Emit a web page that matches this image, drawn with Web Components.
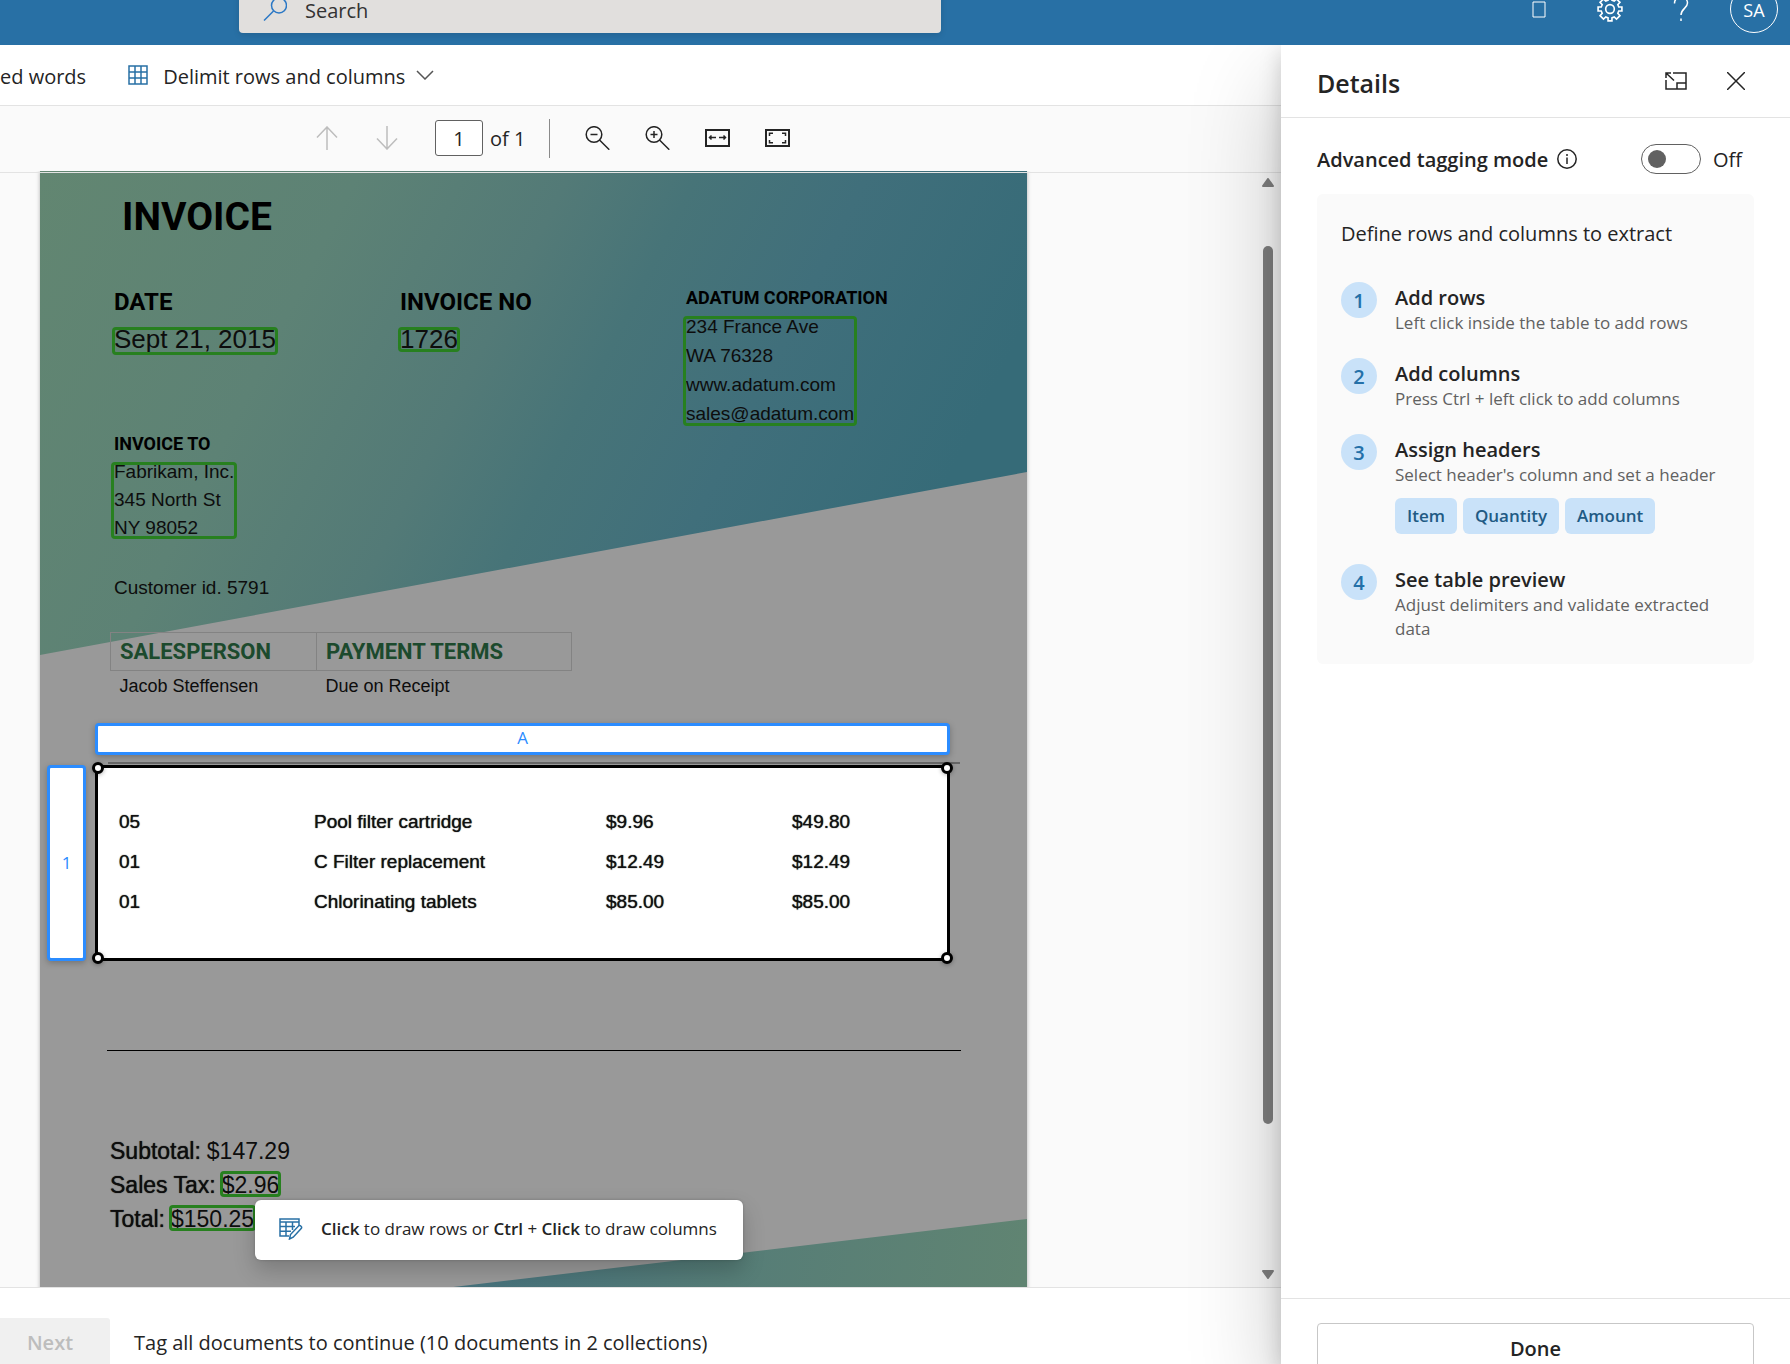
<!DOCTYPE html>
<html lang="en">
<head>
<meta charset="utf-8">
<title>Tag documents</title>
<style>
    html, body { height: 100%; margin: 0; }
    body {
        --ui-font: "Open Sans", "Noto Sans", sans-serif;
        --ink: #242424;
        --brand: #2870a5;
        --line: #e3e3e3;
        font-family: var(--ui-font);
        font-size: 20px;
        color: var(--ink);
        background: #fff;
        overflow: hidden;
    }
</style>
</head>
<body>
<tagging-app></tagging-app>

<script>
const ICONS = {
    search: { box: '0 0 24 24', size: [24, 24], body: '<circle cx="16" cy="8.500" r="7.500"/><path d="M10.500 14 1 23.500"/>' },
    square: { box: '0 0 14 17', size: [14, 17], body: '<path d="M1 1h12v15H1z"/>' },
    gear: {
        box: '0 0 24 24', size: [26, 26],
        body: '<circle cx="12" cy="12" r="4"/><path d="M10.200 1v2.800l-2.100.9L6 2.700 2.800 5.900l2 2.200-.9 2.100H1v3.600h2.900l.9 2.100-2 2.200L6 21.300l2.100-2 2.100.9V23h3.600v-2.800l2.100-.9 2.100 2 3.200-3.200-2-2.200.9-2.100H23v-3.600h-2.900l-.9-2.100 2-2.200L18 2.700l-2.100 2-2.100-.9V1"/>'
    },
    help: { box: '0 0 16 26', size: [16, 26], body: '<path d="M1.500 7.500C1.500 3.500 4 1.500 8 1.500s6.500 2.300 6.500 5.500c0 5-6.500 6-6.500 12"/><path d="M8 22.500v2.500"/>' },
    grid: { box: '0 0 20 20', size: [20, 20], body: '<path d="M1 1h18v18H1zM1 7h18M1 13h18M7 1v18M13 1v18"/>' },
    chevron: { box: '0 0 18 10', size: [18, 10], body: '<path d="m1 1 8 8 8-8"/>' },
    up: { box: '0 0 22 24', size: [22, 24], body: '<path d="M11 24V1M1 11.500 11 1l10 10.500"/>' },
    down: { box: '0 0 22 24', size: [22, 24], body: '<path d="M11 0v23M1 12.500 11 23l10-10.500"/>' },
    zoomOut: { box: '0 0 25 24', size: [25, 24], body: '<circle cx="9" cy="8.500" r="7.800"/><path d="m14.500 14 9.800 9.700M5.500 8.500h7"/>' },
    zoomIn: { box: '0 0 25 24', size: [25, 24], body: '<circle cx="9" cy="8.500" r="7.800"/><path d="m14.500 14 9.800 9.700M5.500 8.500h7M9 5v7"/>' },
    fitWidth: { box: '0 0 25 18', size: [25, 18], body: '<path d="M1 1h23v16H1z"/><path stroke-width="1.500" d="M4.500 8.500H11M14 8.500h6.500M6.500 6.500l-2 2 2 2M18.500 6.500l2 2-2 2"/>' },
    fitPage: { box: '0 0 25 18', size: [25, 18], body: '<path d="M1 1h23v16H1z"/><path stroke-width="1.500" d="M4.500 7V4.200H8M17 4.200h3.500V7M20.500 11v2.800H17M8 13.800H4.500V11"/>' },
    dock: { box: '0 0 22 18', size: [22, 18], body: '<path d="M8 1h13v16H1V8M12 17v-6h9M1 6V1h5M1.500 1.500 9 8.500"/>' },
    close: { box: '0 0 18 18', size: [18, 18], body: '<path d="m0 0 18 18M18 0 0 18"/>' },
    info: { box: '0 0 20 20', size: [20, 20], body: '<circle cx="10" cy="10" r="9.200"/><path d="M10 8.500v6.500M10 5v2"/>' },
    tableEdit: {
        box: '0 0 24 22', size: [24, 22],
        body: '<path d="M10 18H1V1h19v6M1 4h19M1 8.500h15M1 13.200h11M7 4v14M13.500 4v8M20 4v4"/><path d="m10.500 21 1-4.500 8-8.500c1.800-1.200 4 .8 2.700 2.600l-8 8.600z"/>'
    }
};

/* Each component fills its shadow root from its own static template string. */
class UiElement extends HTMLElement {
    constructor() {
        super();
        this.attachShadow({ mode: 'open' });
        const template = document.createElement('template');
        template.innerHTML = `
            <style>
                * { box-sizing: border-box; }
                button, input { font: inherit; color: inherit; margin: 0; }
                button { background: none; border: 0; padding: 0; cursor: pointer; }
                ${this.constructor.css || ''}
            </style>
            ${this.constructor.html || '<slot></slot>'}
        `;
        this.shadowRoot.appendChild(template.content.cloneNode(true));
    }
}

class UiIcon extends UiElement {
    static css = `
        :host { display: inline-flex; flex: none; }
        svg { display: block; fill: none; stroke: currentColor; stroke-width: var(--stroke, 1.500); }
    `;
    static html = '<div></div>';

    connectedCallback() {
        const icon = ICONS[this.getAttribute('name')];
        this.shadowRoot.querySelector('div').innerHTML =
            `<svg aria-hidden="true" width="${icon.size[0]}" height="${icon.size[1]}" viewBox="${icon.box}">${icon.body}</svg>`;
    }
}

class SuiteHeader extends UiElement {
    static css = `
        :host {
            display: flex; flex-direction: column; justify-content: flex-end;
            height: 45px; overflow: hidden; position: relative; z-index: 3;
            background: var(--brand); color: #fff;
        }
        .bar { flex: none; height: 72px; display: flex; align-items: center; padding: 0 12px 0 239px; }
        .search {
            flex: 0 1 702px; height: 48px; display: flex; align-items: center; gap: 18px; padding: 0 24px;
            background: #e1dfdd; border-radius: 4px; color: #2b78c5; box-shadow: 0 2px 6px rgba(0,0,0,.12);
        }
        .search input { flex: 1; min-width: 0; border: 0; background: none; outline: 0; padding: 2px 0 0; color: #333; }
        .search input::placeholder { color: #333; opacity: 1; }
        .actions { margin-left: auto; display: flex; align-items: center; }
        .actions button { width: 71px; height: 48px; display: grid; place-items: center; }
        .actions .avatar {
            width: 48px; height: 48px; margin-left: 14px; padding-top: 2px; line-height: 18px;
            border: 1px solid #fff; border-radius: 50%; font-size: 18px; font-weight: 500;
        }
    `;
    static html = `
        <div class="bar">
            <label class="search"><ui-icon name="search"></ui-icon><input type="text" placeholder="Search" aria-label="Search"></label>
            <div class="actions">
                <button aria-label="Apps"><ui-icon name="square" style="--stroke: 1"></ui-icon></button>
                <button aria-label="Settings"><ui-icon name="gear"></ui-icon></button>
                <button aria-label="Help"><ui-icon name="help"></ui-icon></button>
                <button class="avatar">SA</button>
            </div>
        </div>
    `;
}

class CommandBar extends UiElement {
    static css = `
        :host {
            display: flex; align-items: center; gap: 42px; height: 61px; flex: none;
            border-bottom: 1px solid var(--line); background: #fff; white-space: nowrap;
        }
        button { display: flex; align-items: center; }
        span { padding-top: 2px; }
        .menu ui-icon:first-child { color: var(--brand); margin-right: 15px; }
        .menu ui-icon:last-child { color: #555; margin-left: 11px; }
    `;
    static html = `
        <button><span>ed words</span></button>
        <button class="menu" aria-haspopup="true">
            <ui-icon name="grid"></ui-icon><span>Delimit rows and columns</span><ui-icon name="chevron"></ui-icon>
        </button>
    `;
}

class PageToolbar extends UiElement {
    static css = `
        :host { display: flex; align-items: center; height: 65px; flex: none; padding: 0 0 1px 297px; background: #fafafa; }
        button { width: 60px; height: 48px; display: grid; place-items: center; }
        button:disabled { color: #bdbdbd; cursor: default; }
        label { display: flex; align-items: center; gap: 7px; margin-left: 18px; }
        input {
            width: 48px; height: 36px; padding: 0; text-align: center;
            border: 1px solid #616161; border-radius: 3px; background: #fff;
        }
        hr { width: 1px; height: 39px; margin: 0 17px 0 24px; border: 0; background: #8a8a8a; }
    `;
    static html = `
        <button disabled aria-label="Previous page"><ui-icon name="up"></ui-icon></button>
        <button disabled aria-label="Next page"><ui-icon name="down"></ui-icon></button>
        <label><input type="text" value="1" aria-label="Page">of 1</label>
        <hr>
        <button aria-label="Zoom out"><ui-icon name="zoomOut"></ui-icon></button>
        <button aria-label="Zoom in"><ui-icon name="zoomIn"></ui-icon></button>
        <button aria-label="Fit to width"><ui-icon name="fitWidth" style="--stroke: 2"></ui-icon></button>
        <button aria-label="Fit to page"><ui-icon name="fitPage" style="--stroke: 2"></ui-icon></button>
    `;
}

/* Text with the green frame of a tagged field laid over it. */
class FieldTag extends UiElement {
    static css = `
        :host { display: inline-block; position: relative; }
        :host::after {
            content: ''; position: absolute; inset: var(--frame, 3px -2px 5px);
            border: 3px solid #27801f; border-radius: 4px; pointer-events: none;
        }
    `;
}

class TableSelection extends UiElement {
    static css = `
        :host {
            display: grid; grid-template: 32px 196px / 39px 1fr; gap: 10px 9px;
            font-family: var(--ui-font); font-size: 17px; color: #2b8cff;
        }
        .header {
            display: grid; place-items: center; background: #fff; line-height: 24px;
            border: 3px solid #2b8cff; border-radius: 4px; box-shadow: 0 2px 6px rgba(0,0,0,.25);
        }
        .column { grid-column: 2; padding-bottom: 2px; }
        .area {
            position: relative; padding: 34px 0 0 21px; background: #fff; border: 3px solid #000;
            font-family: "Liberation Sans", Arial, sans-serif; color: #111;
        }
        .area::before {
            content: ''; position: absolute; top: -6px; left: 10px; right: -13px; height: 2px; background: #666;
        }
        .handle {
            position: absolute; width: 12px; height: 12px; border: 3px solid #000;
            border-radius: 50%; background: #fff; box-shadow: 0 1px 4px rgba(0,0,0,.3);
        }
        .tl { top: -6px; left: -6px; }
        .tr { top: -6px; right: -6px; }
        .bl { bottom: -6px; left: -6px; }
        .br { bottom: -6px; right: -6px; }
    `;
    static html = `
        <div class="header column">A</div>
        <div class="header">1</div>
        <div class="area">
            <slot></slot>
            <span class="handle tl"></span><span class="handle tr"></span>
            <span class="handle bl"></span><span class="handle br"></span>
        </div>
    `;
}

class InvoicePage extends UiElement {
    static css = `
        :host {
            display: block; position: relative; width: 100%; max-width: 987px; aspect-ratio: 987 / 1277; flex: none;
            background: #999; box-shadow: 0 0 4px rgba(0,0,0,.3); color: #0d0d0d;
            font-family: "Liberation Sans", Arial, sans-serif; font-size: 19px; line-height: 29px;
        }
        .backdrop { position: absolute; inset: 0; width: 100%; height: 100%; }
        .content { position: relative; padding: 22px 0 0 74px; }
        h1, h2, h3, p, dl, dd { margin: 0; }
        h1, h2, h3, th { font-family: Roboto, sans-serif; font-weight: 700; color: #000; }
        h1 { font-size: 39px; line-height: 48px; margin: 0 0 43px 8px; }
        h2 { font-size: 24px; line-height: 36px; margin-bottom: 4px; }
        h3 { font-size: 18px; line-height: 28px; }
        .heads { display: grid; grid-template-columns: 286px 286px 1fr; }
        .big { font-size: 26px; line-height: 30px; }
        .to { margin-top: 2px; line-height: 28px; }
        .customer { margin-top: 31px; }
        table { border-collapse: collapse; table-layout: fixed; text-align: left; }
        .terms { width: 462px; margin: 30px 0 0 -4px; font-size: 18px; }
        .terms th {
            height: 38px; padding: 0 9px; border: 1px solid #838383;
            font-size: 22px; line-height: 24px; color: #1c4a2d;
        }
        .terms td { padding: 1px 9px 0; line-height: 28px; }
        table-selection { margin: 23px 77px 0 -67px; }
        .items { width: 100%; font-size: 19px; text-shadow: 0 0 1px #111; }
        .items td { height: 40px; padding: 0; line-height: 28px; }
        .rule { height: 1px; margin: 89px 66px 83px -7px; border: 0; background: #000; }
        dl { margin-left: -4px; font-size: 23px; line-height: 34px; }
        dl div { display: flex; gap: 6px; }
        dt { text-shadow: 0 0 1px #0d0d0d; }
    `;
    static html = `
        <svg class="backdrop" viewBox="0 0 987 1277" preserveAspectRatio="none" aria-hidden="true">
            <linearGradient id="top" gradientUnits="userSpaceOnUse" x1="0" y1="0" x2="850" y2="425">
                <stop offset="0" stop-color="#628671"/><stop offset=".3" stop-color="#5d8275"/>
                <stop offset=".5" stop-color="#537a77"/><stop offset=".62" stop-color="#477478"/>
                <stop offset=".78" stop-color="#406f7b"/><stop offset="1" stop-color="#366b78"/>
            </linearGradient>
            <linearGradient id="bottom" gradientUnits="userSpaceOnUse" x1="400" y1="1080" x2="980" y2="1140">
                <stop offset="0" stop-color="#44707c"/><stop offset=".5" stop-color="#567d77"/>
                <stop offset="1" stop-color="#608472"/>
            </linearGradient>
            <path fill="url(#top)" d="M0 0h987v301L0 484z"/>
            <path fill="url(#bottom)" d="M0 1165l987-117v229H0z"/>
        </svg>
        <div class="content">
            <h1>INVOICE</h1>
            <div class="heads">
                <div><h2>DATE</h2><field-tag class="big" style="--frame: 3px -2px -1px">Sept 21, 2015</field-tag></div>
                <div><h2>INVOICE NO</h2><field-tag class="big" style="--frame: 3px -2px 2px">1726</field-tag></div>
                <div>
                    <h3>ADATUM CORPORATION</h3>
                    <field-tag style="--frame: 4px -3px 2px">234 France Ave<br>WA 76328<br>www.adatum.com<br>sales@adatum.com</field-tag>
                </div>
            </div>
            <div class="to">
                <h3>INVOICE TO</h3>
                <field-tag style="--frame: 4px -3px 3px">Fabrikam, Inc.<br>345 North St<br>NY 98052</field-tag>
            </div>
            <p class="customer">Customer id. 5791</p>
            <table class="terms">
                <colgroup><col style="width: 206px"><col></colgroup>
                <tr><th>SALESPERSON</th><th>PAYMENT TERMS</th></tr>
                <tr><td>Jacob Steffensen</td><td>Due on Receipt</td></tr>
            </table>
            <table-selection>
                <table class="items">
                    <colgroup><col style="width: 195px"><col style="width: 292px"><col style="width: 186px"><col></colgroup>
                    <tr><td>05</td><td>Pool filter cartridge</td><td>$9.96</td><td>$49.80</td></tr>
                    <tr><td>01</td><td>C Filter replacement</td><td>$12.49</td><td>$12.49</td></tr>
                    <tr><td>01</td><td>Chlorinating tablets</td><td>$85.00</td><td>$85.00</td></tr>
                </table>
            </table-selection>
            <hr class="rule">
            <dl>
                <div><dt>Subtotal:</dt><dd>$147.29</dd></div>
                <div><dt>Sales Tax:</dt><dd><field-tag>$2.96</field-tag></dd></div>
                <div><dt>Total:</dt><dd><field-tag>$150.25</field-tag></dd></div>
            </dl>
        </div>
    `;
}

class DocumentViewer extends UiElement {
    static css = `
        :host { display: flex; flex: 1; min-height: 0; position: relative; overflow: hidden; background: #fafafa; }
        :host::before {
            content: ''; position: absolute; z-index: 1; top: 1px; left: 0; right: 0; height: 1px; background: var(--line);
        }
        .pages { flex: 1; min-width: 0; padding-left: 40px; }
        .scrollbar { width: 26px; padding: 7px 0 8px; display: flex; flex-direction: column; align-items: center; }
        .track { flex: 1; padding: 59px 0 146px; }
        .thumb { width: 10px; height: 100%; border-radius: 5px; background: #808080; }
        .scrollbar svg { display: block; fill: #808080; stroke: #808080; stroke-width: 2; stroke-linejoin: round; }
        .hint {
            position: absolute; left: 255px; bottom: 27px; height: 60px; padding: 0 26px 0 24px; white-space: nowrap;
            display: flex; align-items: center; gap: 18px; font-size: 17px; line-height: 24px;
            background: #fff; border-radius: 6px; box-shadow: 0 10px 22px rgba(0,0,0,.2), 0 0 3px rgba(0,0,0,.2);
        }
        .hint ui-icon { color: var(--brand); padding-bottom: 3px; }
        .hint span { padding-bottom: 2px; }
        .hint b { font-weight: 600; }
    `;
    static html = `
        <div class="pages"><invoice-page></invoice-page></div>
        <div class="scrollbar" aria-hidden="true">
            <svg width="12" height="9" viewBox="0 0 12 9"><path d="M6 1 11 8H1z"/></svg>
            <div class="track"><div class="thumb"></div></div>
            <svg width="12" height="9" viewBox="0 0 12 9"><path d="M1 1h10L6 8z"/></svg>
        </div>
        <div class="hint" role="status">
            <ui-icon name="tableEdit"></ui-icon>
            <span><b>Click</b> to draw rows or <b>Ctrl</b> + <b>Click</b> to draw columns</span>
        </div>
    `;
}

class WizardFooter extends UiElement {
    static css = `
        :host {
            display: flex; align-items: flex-start; gap: 24px; flex: none; height: 77px; padding-top: 30px;
            border-top: 1px solid var(--line); background: #fff; line-height: 50px; white-space: nowrap;
        }
        button { height: 50px; width: 110px; padding-right: 10px; background: #f0f0f0; color: #bdbdbd; font-weight: 600; border-radius: 0 3px 3px 0; }
    `;
    static html = `
        <button disabled>Next</button>
        <span>Tag all documents to continue (10 documents in 2 collections)</span>
    `;
}

class GuideStep extends UiElement {
    static css = `
        :host { display: flex; gap: 18px; }
        .number {
            flex: none; width: 36px; height: 36px; display: grid; place-items: center;
            border-radius: 50%; background: #c9e2f9; color: #2470a8; font-weight: 600;
        }
        h3 { margin: 2px 0 0; font-size: 20px; font-weight: 600; line-height: 27px; }
        .text { font-size: 17px; line-height: 24px; color: #616161; }
    `;
    static html = `
        <div class="number"></div>
        <div><h3></h3><div class="text"><slot></slot></div></div>
    `;

    connectedCallback() {
        this.shadowRoot.querySelector('.number').textContent = this.getAttribute('number');
        this.shadowRoot.querySelector('h3').textContent = this.getAttribute('heading');
    }
}

class DetailsPanel extends UiElement {
    static css = `
        :host {
            display: flex; flex-direction: column; flex: 0 0 509px; position: relative; z-index: 2; background: #fff;
            box-shadow: 0 38px 86px rgba(0,0,0,.22), 0 7px 21px rgba(0,0,0,.18);
        }
        header { display: flex; align-items: center; height: 73px; padding: 0 30px 0 36px; border-bottom: 1px solid var(--line); }
        h2 { margin: 0 auto 0 0; padding-top: 4px; font-size: 25px; line-height: 36px; font-weight: 600; }
        header button { width: 48px; height: 48px; display: grid; place-items: center; }
        header button:first-of-type { margin-right: 12px; }
        .mode { display: flex; align-items: center; height: 30px; margin: 26px 48px 20px 36px; }
        .mode label { font-weight: 600; margin-right: 9px; }
        .mode input {
            appearance: none; width: 60px; height: 30px; margin: 0 12px 0 auto; padding: 5px 6px;
            border: 1px solid #616161; border-radius: 15px;
        }
        .mode input::before { content: ''; display: block; width: 18px; height: 18px; border-radius: 50%; background: #616161; }
        .mode input:checked { padding-left: 34px; }
        .card { margin: 0 36px; padding: 24px 20px 23px 24px; background: #fafafa; border-radius: 6px; }
        .card p { margin: 0 0 32px; line-height: 32px; }
        guide-step + guide-step { margin-top: 23px; }
        .chips { display: flex; gap: 6px; padding: 11px 0 7px; }
        .chips span {
            padding: 0 12px; font-weight: 600; line-height: 36px; color: #215a84; background: #c9e2f9; border-radius: 6px;
        }
        footer { margin-top: auto; height: 66px; padding: 24px 36px 0; border-top: 1px solid var(--line); overflow: hidden; }
        footer button { width: 100%; height: 50px; border: 1px solid #c7c7c7; border-radius: 4px; font-weight: 600; }
    `;
    static html = `
        <header>
            <h2>Details</h2>
            <button aria-label="Dock panel"><ui-icon name="dock"></ui-icon></button>
            <button aria-label="Close"><ui-icon name="close"></ui-icon></button>
        </header>
        <div class="mode">
            <label for="advanced">Advanced tagging mode</label><ui-icon name="info"></ui-icon>
            <input id="advanced" type="checkbox" role="switch"><span>Off</span>
        </div>
        <section class="card">
            <p>Define rows and columns to extract</p>
            <guide-step number="1" heading="Add rows">Left click inside the table to add rows</guide-step>
            <guide-step number="2" heading="Add columns">Press Ctrl + left click to add columns</guide-step>
            <guide-step number="3" heading="Assign headers">
                Select header's column and set a header
                <div class="chips"><span>Item</span><span>Quantity</span><span>Amount</span></div>
            </guide-step>
            <guide-step number="4" heading="See table preview">Adjust delimiters and validate extracted data</guide-step>
        </section>
        <footer><button>Done</button></footer>
    `;
}

class TaggingApp extends UiElement {
    static css = `
        :host { display: flex; flex-direction: column; height: 100vh; overflow: hidden; }
        .body { flex: 1; min-height: 0; display: flex; }
        main { flex: 1; min-width: 0; display: flex; flex-direction: column; }
    `;
    static html = `
        <suite-header></suite-header>
        <div class="body">
            <main>
                <command-bar></command-bar>
                <page-toolbar></page-toolbar>
                <document-viewer></document-viewer>
                <wizard-footer></wizard-footer>
            </main>
            <details-panel></details-panel>
        </div>
    `;
}

customElements.define('ui-icon', UiIcon);
customElements.define('field-tag', FieldTag);
customElements.define('table-selection', TableSelection);
customElements.define('invoice-page', InvoicePage);
customElements.define('guide-step', GuideStep);
customElements.define('suite-header', SuiteHeader);
customElements.define('command-bar', CommandBar);
customElements.define('page-toolbar', PageToolbar);
customElements.define('document-viewer', DocumentViewer);
customElements.define('wizard-footer', WizardFooter);
customElements.define('details-panel', DetailsPanel);
customElements.define('tagging-app', TaggingApp);
</script>
</body>
</html>
